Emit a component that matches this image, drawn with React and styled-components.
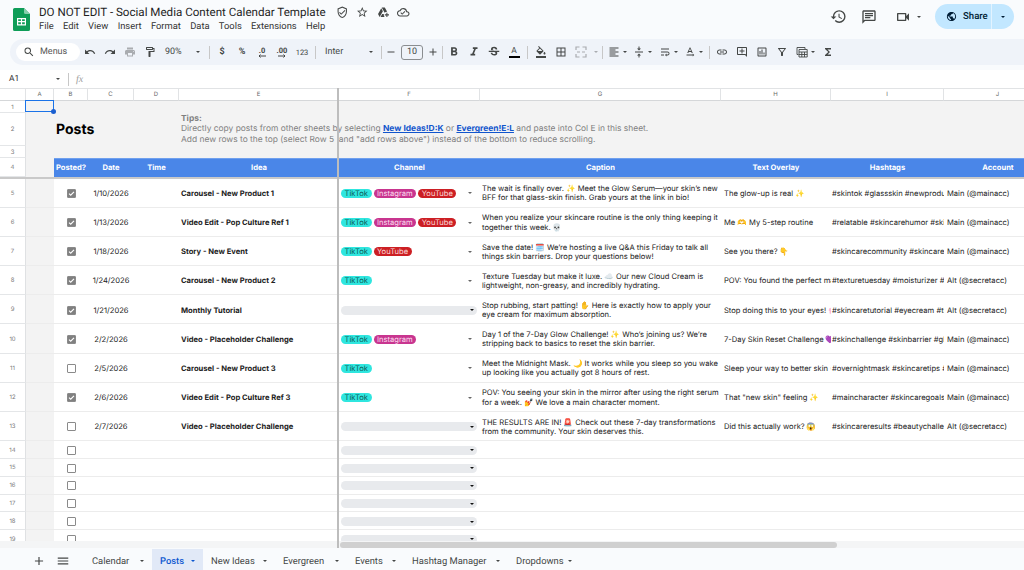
import React from 'react';
import styled, { createGlobalStyle } from 'styled-components';
import {
    MdOutlineVerifiedUser, MdStarBorder, MdOutlineAddToDrive, MdOutlineCloudDone, MdHistory, MdOutlineChat,
    MdOutlineVideocam, MdPublic, MdSearch, MdUndo, MdRedo, MdPrint, MdOutlineFormatPaint, MdAdd, MdRemove,
    MdFormatBold, MdFormatItalic, MdStrikethroughS, MdFormatColorFill, MdBorderAll, MdFormatAlignLeft,
    MdVerticalAlignCenter, MdOutlineWrapText, MdTextRotationNone, MdLink, MdOutlineAddComment,
    MdOutlineInsertChart, MdOutlineFilterAlt, MdFunctions, MdMenu,
} from 'react-icons/md';

const UI_FONT = 'Roboto, "Liberation Sans", sans-serif';
const CELL_FONT = 'Inter, "Liberation Sans", "Noto Sans", sans-serif';
const COLS = '26px 28px 34px 46px 45px 160px 141px 241px 110px 113px 108px';

const GlobalStyle = createGlobalStyle`
    html, body { margin: 0; padding: 0; background: #f9fbfd; overflow: hidden; }
    body { text-rendering: geometricPrecision; }
    #root { width: 1024px; height: 570px; }
`;

const Page = styled.div`
    width: 1024px;
    height: 570px;
    display: flex;
    flex-direction: column;
    overflow: hidden;
    background: #f9fbfd;
    color: #1f1f1f;
    font-family: ${UI_FONT};
`;

/* title bar */
const TitleBar = styled.header`
    height: 39px;
    flex: none;
    display: flex;
    align-items: flex-start;
    padding-left: 13px;
    box-sizing: border-box;
`;

const Logo = styled.svg`
    width: 17px;
    height: 23px;
    margin-top: 8px;
    flex: none;
`;

const TitleBlock = styled.div`
    margin-left: 9px;
    display: flex;
    flex-direction: column;
`;

const TitleRow = styled.div`
    display: flex;
    align-items: center;
    height: 18px;
    margin-top: 3px;
`;

const DocName = styled.span`
    font-size: 11.6px;
    white-space: nowrap;
    color: #1f1f1f;
`;

const TitleIcons = styled.div`
    margin-left: 10px;
    display: flex;
    gap: 8px;
    font-size: 12px;
    color: #444746;
    svg { display: block; width: 12.5px; height: 12.5px; }
`;

const MenuRow = styled.nav`
    display: flex;
    gap: 9.25px;
    font-size: 9.4px;
    color: #333;
    line-height: 12px;
`;

const RightActions = styled.div`
    margin-left: auto;
    margin-right: 10px;
    display: flex;
    align-items: center;
    height: 25px;
    margin-top: 4px;
    color: #444746;
`;

const ActionIcon = styled.span`
    display: flex;
    font-size: ${props => props.$size || 16}px;
    margin-right: ${props => props.$gap || 0}px;
`;

const Caret = styled.span`
    display: inline-block;
    flex: none;
    width: 0;
    height: 0;
    border-left: ${props => props.$size || 2.5}px solid transparent;
    border-right: ${props => props.$size || 2.5}px solid transparent;
    border-top: ${props => props.$size || 2.5}px solid ${props => props.$color || '#444746'};
`;

const ShareButton = styled.div`
    margin-left: 14px;
    width: 79px;
    height: 25px;
    border-radius: 13px;
    background: #c2e7ff;
    display: flex;
    align-items: center;
    color: #001d35;
`;

const ShareMain = styled.div`
    width: 57px;
    height: 25px;
    display: flex;
    align-items: center;
    gap: 6px;
    padding-left: 11px;
    box-sizing: border-box;
    border-right: 1px solid #e3f3ff;
    font-size: 9.6px;
    font-weight: 500;
    svg { font-size: 11px; }
`;

const ShareCaret = styled.div`
    flex: 1;
    display: flex;
    justify-content: center;
`;

/* toolbar */
const Toolbar = styled.div`
    height: 26px;
    flex: none;
    margin-left: 10px;
    padding-left: 6px;
    border-radius: 13px 0 0 13px;
    background: #eff3f9;
    display: flex;
    align-items: center;
    color: #444746;
`;

const SearchPill = styled.div`
    width: 64px;
    height: 18px;
    box-sizing: border-box;
    padding-left: 7px;
    border-radius: 9px;
    background: #fff;
    display: flex;
    align-items: center;
    gap: 5px;
    font-size: 9px;
    color: #555;
    svg { font-size: 12px; color: #444746; }
`;

const ToolButton = styled.span`
    width: ${props => props.$w || 20}px;
    height: 20px;
    flex: none;
    display: flex;
    align-items: center;
    justify-content: center;
    gap: ${props => props.$gap ?? 3}px;
    font-size: ${props => props.$size || 12}px;
    color: ${props => props.$muted ? '#a9acb0' : '#444746'};
`;

const Label = styled.span`
    font-size: ${props => props.$size || 9}px;
    font-weight: ${props => props.$bold ? 700 : 400};
    white-space: nowrap;
`;

const Select = styled.span`
    width: ${props => props.$w}px;
    height: 20px;
    flex: none;
    display: flex;
    align-items: center;
    justify-content: space-between;
    padding: 0 6px 0 ${props => props.$pad || 5}px;
    box-sizing: border-box;
    font-size: 9px;
`;

const Divider = styled.span`
    width: 1px;
    height: 13px;
    flex: none;
    margin: 0 ${props => props.$r ?? 2}px 0 ${props => props.$l ?? 3}px;
    background: #c7c7c7;
`;

const SizeBox = styled.span`
    width: 22px;
    height: 15px;
    margin: 0 1px;
    box-sizing: border-box;
    flex: none;
    display: flex;
    align-items: center;
    justify-content: center;
    border: 1px solid #8a8d90;
    border-radius: 3px;
    font-size: 9px;
`;

const Decimal = styled.span`
    display: flex;
    flex-direction: column;
    align-items: center;
    font-size: 7.5px;
    font-weight: 700;
    line-height: 7px;
`;

const TextColor = styled.span`
    display: flex;
    flex-direction: column;
    align-items: center;
    width: 11px;
    font-size: 8.5px;
    line-height: 9px;
    border-bottom: 2.5px solid #000;
`;

/* formula bar */
const FormulaBar = styled.div`
    height: 18px;
    flex: none;
    margin-top: 5px;
    background: #fff;
    display: flex;
    align-items: center;
    padding-left: 9px;
    font-size: 8.5px;
    color: #333;
`;

const NameBox = styled.span`
    width: 51px;
    display: flex;
    align-items: center;
    justify-content: space-between;
    margin-right: 5px;
`;

const Fx = styled.span`
    margin-left: 7px;
    font-family: "Liberation Serif", serif;
    font-style: italic;
    font-size: 10px;
    color: #9a9a9a;
`;

/* the sheet */
const Sheet = styled.main`
    position: relative;
    height: 453px;
    flex: none;
    overflow: hidden;
    background: #fff;
    font-family: ${CELL_FONT};
    font-size: 7.6px;
    color: #222;
`;

const FreezeColumn = styled.div`
    position: absolute;
    left: 337px;
    top: 0;
    bottom: 0;
    width: 2px;
    background: #bdbdbd;
    z-index: 3;
`;

const Row = styled.div`
    display: grid;
    grid-template-columns: ${COLS};
    height: ${props => props.$h}px;
    box-sizing: border-box;
`;

const ColHead = styled.div`
    display: flex;
    align-items: center;
    justify-content: center;
    box-sizing: border-box;
    border-right: 1px solid #e1e3e5;
    border-top: 1px solid #e1e3e5;
    border-bottom: 1px solid #d5d7d9;
    font-size: 6px;
    color: #666;
    background: #fff;
`;

const RowHead = styled.div`
    display: flex;
    align-items: center;
    justify-content: center;
    box-sizing: border-box;
    padding-top: 1px;
    border-right: 1px solid #dfe1e3;
    border-bottom: 1px solid #e4e6e8;
    font-size: 6px;
    color: #777;
    background: #fff;
`;

const Gutter = styled.div`
    position: relative;
    background: #f3f3f3;
    box-sizing: border-box;
    border-bottom: 1px solid ${props => props.$plain ? '#f3f3f3' : '#ececec'};
`;

const Selection = styled.div`
    position: absolute;
    inset: -1px 0 0 -1px;
    border: 1px solid #1a73e8;
    z-index: 2;
    &::after {
        content: '';
        position: absolute;
        right: -3px;
        bottom: -3px;
        width: 5px;
        height: 5px;
        border-radius: 50%;
        background: #1a5fd0;
    }
`;

const Banner = styled.div`
    grid-column: 3 / -1;
    background: #f3f3f3;
    display: flex;
    align-items: center;
`;

const BannerPosts = styled.h1`
    margin: 0;
    width: 127px;
    box-sizing: border-box;
    flex: none;
    padding-left: 2px;
    font-size: 14px;
    line-height: 16px;
    font-weight: 700;
    color: #000;
`;

const Tips = styled.div`
    line-height: 10.2px;
    font-size: 8.42px;
    color: #7f7f7f;
    white-space: nowrap;
    b { font-weight: 700; }
    a { color: #1155cc; font-weight: 700; text-decoration: underline; }
`;

const GreyFill = styled.div`
    background: #f3f3f3;
    grid-column: ${props => props.$span};
`;

const HeadCell = styled.div`
    background: #4a86e8;
    border-top: 1px solid #6fa0ee;
    color: #fff;
    font-weight: 700;
    display: flex;
    align-items: center;
    justify-content: center;
    white-space: nowrap;
`;

const FreezeRow = styled.div`
    height: 2px;
    background: #c9c9c9;
`;

const Cell = styled.div`
    box-sizing: border-box;
    border-bottom: 1px solid #ececec;
    display: flex;
    align-items: center;
    justify-content: ${props => props.$center ? 'center' : 'flex-start'};
    padding-top: 1.5px;
    padding-left: ${props => props.$center ? 0 : props.$pad ?? 2}px;
    font-weight: ${props => props.$bold ? 700 : 400};
    overflow: hidden;
    white-space: nowrap;
    min-width: 0;
    color: #222;
`;

const Caption = styled.div`
    line-height: 9.2px;
`;

const Check = styled.span`
    width: 9px;
    height: 9px;
    box-sizing: border-box;
    border-radius: 1px;
    display: flex;
    align-items: center;
    justify-content: center;
    background: ${props => props.$on ? '#808080' : '#fff'};
    border: 1px solid #8a8a8a;
`;

const ChipCell = styled.div`
    box-sizing: border-box;
    border-bottom: 1px solid #ececec;
    padding: 1.5px 3px 0 2px;
    display: flex;
    align-items: center;
    overflow: hidden;
`;

const Chips = styled.div`
    flex: 1;
    display: flex;
    align-items: center;
    gap: 2px;
`;

const Chip = styled.span`
    height: 9px;
    padding: 0 3.5px;
    border-radius: 5px;
    line-height: 9px;
    font-size: 7.6px;
    background: ${props => props.$bg};
    color: ${props => props.$fg};
    white-space: nowrap;
`;

const EmptyChip = styled.div`
    flex: 1;
    height: 9px;
    border-radius: 5px;
    background: #e8eaed;
    display: flex;
    align-items: center;
    justify-content: flex-end;
    padding-right: 3px;
`;

const RowCaret = styled.span`
    margin-right: 5px;
    display: flex;
`;

/* bottom */
const ScrollTrack = styled.div`
    position: relative;
    height: 7px;
    flex: none;
    background: #f4f5f6;
`;

const ScrollThumb = styled.div`
    position: absolute;
    left: 340px;
    top: 1px;
    width: 497px;
    height: 6px;
    border-radius: 3px;
    background: #d0d0d0;
`;

const ScrollFreeze = styled.div`
    position: absolute;
    left: 337px;
    top: 0;
    bottom: 0;
    width: 2px;
    background: #bdbdbd;
`;

const TabBar = styled.footer`
    flex: 1;
    display: flex;
    align-items: stretch;
    padding: 1px 0 0 32px;
    color: #444746;
`;

const TabTool = styled.span`
    width: ${props => props.$w}px;
    display: flex;
    align-items: center;
    font-size: 14px;
    padding-top: 2px;
`;

const Tab = styled.div`
    width: ${props => props.$w}px;
    box-sizing: border-box;
    display: flex;
    align-items: center;
    justify-content: space-between;
    padding: 3px 8.5px 0 8px;
    font-size: 9.4px;
    background: ${props => props.$active ? '#e1e9f7' : 'transparent'};
    color: ${props => props.$active ? '#0b57d0' : '#444746'};
    font-weight: ${props => props.$active ? 500 : 400};
`;

const MENUS = ['File', 'Edit', 'View', 'Insert', 'Format', 'Data', 'Tools', 'Extensions', 'Help'];
const LETTERS = ['A', 'B', 'C', 'D', 'E', 'F', 'G', 'H', 'I', 'J'];

const T = 'TikTok', I = 'Instagram', Y = 'YouTube';
const CHIP_COLORS = {
    [T]: { bg: '#2fe6df', fg: '#0d5a58' },
    [I]: { bg: '#c8358f', fg: '#fbdcee' },
    [Y]: { bg: '#cc1f24', fg: '#fbd7d7' },
};

const MAIN = 'Main (@mainacc)', ALT = 'Alt (@secretacc)';
const POSTS = [
    { n: 5, on: true, date: '1/10/2026', idea: 'Carousel - New Product 1', ch: [T, I, Y],
      cap: ['The wait is finally over. ✨ Meet the Glow Serum—your skin’s new', 'BFF for that glass-skin finish. Grab yours at the link in bio!'],
      over: 'The glow-up is real ✨', tags: '#skintok #glassskin #newproduct', acc: MAIN },
    { n: 6, on: true, date: '1/13/2026', idea: 'Video Edit - Pop Culture Ref 1', ch: [T, I, Y],
      cap: ['When you realize your skincare routine is the only thing keeping it', 'together this week. 💀'],
      over: 'Me 🫶 My 5-step routine', tags: '#relatable #skincarehumor #skincare', acc: MAIN },
    { n: 7, on: true, date: '1/18/2026', idea: 'Story - New Event', ch: [T, Y],
      cap: ['Save the date! 🗓️ We’re hosting a live Q&A this Friday to talk all', 'things skin barriers. Drop your questions below!'],
      over: 'See you there? 👇', tags: '#skincarecommunity #skincaretips', acc: MAIN },
    { n: 8, on: true, date: '1/24/2026', idea: 'Carousel - New Product 2', ch: [T],
      cap: ['Texture Tuesday but make it luxe. ☁️ Our new Cloud Cream is', 'lightweight, non-greasy, and incredibly hydrating.'],
      over: 'POV: You found the perfect match', tags: '#texturetuesday #moisturizer #skincare', acc: ALT },
    { n: 9, on: true, date: '1/21/2026', idea: 'Monthly Tutorial', ch: [],
      cap: ['Stop rubbing, start patting! ✋ Here is exactly how to apply your', 'eye cream for maximum absorption.'],
      over: 'Stop doing this to your eyes! 🌸', tags: '#skincaretutorial #eyecream #tips', acc: ALT },
    { n: 10, on: true, date: '2/2/2026', idea: 'Video - Placeholder Challenge', ch: [T, I],
      cap: ['Day 1 of the 7-Day Glow Challenge! ✨ Who’s joining us? We’re', 'stripping back to basics to reset the skin barrier.'],
      over: '7-Day Skin Reset Challenge 💜', tags: '#skinchallenge #skinbarrier #glowup', acc: MAIN },
    { n: 11, on: false, date: '2/5/2026', idea: 'Carousel - New Product 3', ch: [T],
      cap: ['Meet the Midnight Mask. 🌙 It works while you sleep so you wake', 'up looking like you actually got 8 hours of rest.'],
      over: 'Sleep your way to better skin 😴', tags: '#overnightmask #skincaretips #glow', acc: MAIN },
    { n: 12, on: true, date: '2/6/2026', idea: 'Video Edit - Pop Culture Ref 3', ch: [T],
      cap: ['POV: You seeing your skin in the mirror after using the right serum', 'for a week. 💅 We love a main character moment.'],
      over: 'That "new skin" feeling ✨', tags: '#maincharacter #skincaregoals #pov', acc: MAIN },
    { n: 13, on: false, date: '2/7/2026', idea: 'Video - Placeholder Challenge', ch: [],
      cap: ['THE RESULTS ARE IN! 🚨 Check out these 7-day transformations', 'from the community. Your skin deserves this.'],
      over: 'Did this actually work? 😱', tags: '#skincareresults #beautychallenge', acc: ALT },
];
const BLANK_ROWS = [14, 15, 16, 17, 18, 19];
const HEADERS = ['Posted?', 'Date', 'Time', 'Idea', 'Channel', 'Caption', 'Text Overlay', 'Hashtags', 'Account'];
const TABS = [
    { name: 'Calendar', w: 68 }, { name: 'Posts', w: 51, active: true }, { name: 'New Ideas', w: 72 }, { name: 'Evergreen', w: 72 },
    { name: 'Events', w: 57 }, { name: 'Hashtag Manager', w: 104 }, { name: 'Dropdowns', w: 72 },
];

function SheetsLogo() {
    return (
        <Logo viewBox="0 0 17 23">
            <path d="M1.6 0H11l6 6v15.4a1.6 1.6 0 0 1-1.6 1.6H1.6A1.6 1.6 0 0 1 0 21.4V1.6A1.6 1.6 0 0 1 1.6 0z" fill="#0f9d58" />
            <path d="M11 0l6 6h-4.4A1.6 1.6 0 0 1 11 4.4z" fill="#87ceac" />
            <path d="M4 10h9v7.5H4zM5.2 11.2v1.9h2.7v-1.9zm3.9 0v1.9h2.7v-1.9zM5.2 14.3v2h2.7v-2zm3.9 0v2h2.7v-2z" fill="#fff" fillRule="evenodd" />
        </Logo>
    );
}

function Arrow({ left }) {
    return (
        <svg width="8" height="4" viewBox="0 0 8 4">
            <path d={left ? 'M8 2H1M2.5 .5L1 2l1.5 1.5' : 'M0 2h7M5.5 .5L7 2 5.5 3.5'} stroke="#444746" fill="none" />
        </svg>
    );
}

function MergeIcon() {
    return (
        <svg width="12" height="12" viewBox="0 0 12 12" fill="none" stroke="#a9acb0" strokeWidth="1.2">
            <path d="M4.5 1H1v3M1 8v3h3.5M7.5 1H11v3M11 8v3H7.5M2 6h3M10 6H7" />
        </svg>
    );
}

function TableViewIcon() {
    return (
        <svg width="12" height="12" viewBox="0 0 12 12" fill="none" stroke="#444746" strokeWidth="0.9">
            <path d="M2.5 8.5H1V1.5h8V3" />
            <path d="M3 3.5h8.2v7.5H3zM3 6h8.2M3 8.5h8.2M5.8 6v5M8.5 6v5" />
        </svg>
    );
}

function Channel({ list }) {
    if (list.length === 0) {
        return <ChipCell><EmptyChip><Caret $size={2.5} $color="#111" /></EmptyChip></ChipCell>;
    }
    return (
        <ChipCell>
            <Chips>
                {list.map(c => <Chip key={c} $bg={CHIP_COLORS[c].bg} $fg={CHIP_COLORS[c].fg}>{c}</Chip>)}
            </Chips>
            <RowCaret><Caret $size={2} $color="#666" /></RowCaret>
        </ChipCell>
    );
}

function CheckBox({ on }) {
    return (
        <Check $on={on}>
            {on && (
                <svg width="7" height="7" viewBox="0 0 7 7">
                    <path d="M1 3.6l1.7 1.6L6 1.8" stroke="#fff" strokeWidth="1.1" fill="none" />
                </svg>
            )}
        </Check>
    );
}

export default function App() {
    return (
        <Page>
            <GlobalStyle />
            <TitleBar>
                <SheetsLogo />
                <TitleBlock>
                    <TitleRow>
                        <DocName>DO NOT EDIT - Social Media Content Calendar Template</DocName>
                        <TitleIcons>
                            <MdOutlineVerifiedUser />
                            <MdStarBorder />
                            <MdOutlineAddToDrive />
                            <MdOutlineCloudDone />
                        </TitleIcons>
                    </TitleRow>
                    <MenuRow>{MENUS.map(m => <span key={m}>{m}</span>)}</MenuRow>
                </TitleBlock>
                <RightActions>
                    <ActionIcon $size={17} $gap={14.5}><MdHistory /></ActionIcon>
                    <ActionIcon $size={16} $gap={18}><MdOutlineChat /></ActionIcon>
                    <ActionIcon $size={16} $gap={6}><MdOutlineVideocam /></ActionIcon>
                    <Caret />
                    <ShareButton>
                        <ShareMain><MdPublic />Share</ShareMain>
                        <ShareCaret><Caret $color="#001d35" /></ShareCaret>
                    </ShareButton>
                </RightActions>
            </TitleBar>

            <Toolbar>
                <SearchPill><MdSearch />Menus</SearchPill>
                <ToolButton><MdUndo /></ToolButton>
                <ToolButton><MdRedo /></ToolButton>
                <ToolButton $muted><MdPrint /></ToolButton>
                <ToolButton><MdOutlineFormatPaint /></ToolButton>
                <Select $w={46}>90%<Caret /></Select>
                <Divider />
                <ToolButton><Label $bold>$</Label></ToolButton>
                <ToolButton><Label $bold>%</Label></ToolButton>
                <ToolButton><Decimal>.0<Arrow left /></Decimal></ToolButton>
                <ToolButton><Decimal>.00<Arrow /></Decimal></ToolButton>
                <ToolButton><Label $size={7.5}>123</Label></ToolButton>
                <Divider />
                <Select $w={61} $pad={7}>Inter<Caret /></Select>
                <Divider $r={0} $l={2} />
                <ToolButton $w={18}><MdRemove /></ToolButton>
                <SizeBox>10</SizeBox>
                <ToolButton $w={18}><MdAdd /></ToolButton>
                <Divider $l={0} $r={1} />
                <ToolButton $size={14}><MdFormatBold /></ToolButton>
                <ToolButton $size={14}><MdFormatItalic /></ToolButton>
                <ToolButton $size={14}><MdStrikethroughS /></ToolButton>
                <ToolButton><TextColor>A</TextColor></ToolButton>
                <Divider $r={3} />
                <ToolButton><MdFormatColorFill /></ToolButton>
                <ToolButton><MdBorderAll /></ToolButton>
                <ToolButton $w={31} $gap={7}><MergeIcon /><Caret $size={2} $color="#a9acb0" /></ToolButton>
                <Divider $l={0} $r={1} />
                <ToolButton $w={26}><MdFormatAlignLeft /><Caret $size={2} /></ToolButton>
                <ToolButton $w={25}><MdVerticalAlignCenter /><Caret $size={2} /></ToolButton>
                <ToolButton $w={26}><MdOutlineWrapText /><Caret $size={2} /></ToolButton>
                <ToolButton $w={25}><MdTextRotationNone /><Caret $size={2} /></ToolButton>
                <Divider />
                <ToolButton><MdLink /></ToolButton>
                <ToolButton><MdOutlineAddComment /></ToolButton>
                <ToolButton><MdOutlineInsertChart /></ToolButton>
                <ToolButton><MdOutlineFilterAlt /></ToolButton>
                <ToolButton $w={26}><TableViewIcon /><Caret $size={2} /></ToolButton>
                <ToolButton><MdFunctions /></ToolButton>
            </Toolbar>

            <FormulaBar>
                <NameBox>A1<Caret /></NameBox>
                <Divider $l={3} $r={0} />
                <Fx>fx</Fx>
            </FormulaBar>

            <Sheet>
                <FreezeColumn />
                <Row $h={13}>
                    <ColHead />
                    {LETTERS.map(l => <ColHead key={l}>{l}</ColHead>)}
                </Row>
                <Row $h={12}>
                    <RowHead>1</RowHead>
                    <Gutter $plain><Selection /></Gutter>
                    <GreyFill $span="3 / -1" />
                </Row>
                <Row $h={33}>
                    <RowHead>2</RowHead>
                    <Gutter $plain />
                    <Banner>
                        <BannerPosts>Posts</BannerPosts>
                        <Tips>
                            <b>Tips:</b><br />
                            Directly copy posts from other sheets by selecting <a>New Ideas!D:K</a> or <a>Evergreen!E:L</a> and paste into Col E in this sheet.<br />
                            Add new rows to the top (select Row 5 &nbsp;and "add rows above") instead of the bottom to reduce scrolling.
                        </Tips>
                    </Banner>
                </Row>
                <Row $h={12}>
                    <RowHead>3</RowHead>
                    <Gutter $plain />
                    <GreyFill $span="3 / -1" />
                </Row>
                <Row $h={18.5}>
                    <RowHead>4</RowHead>
                    <Gutter $plain />
                    {HEADERS.map(h => <HeadCell key={h}>{h}</HeadCell>)}
                </Row>
                <FreezeRow />
                {POSTS.map(p => (
                    <Row $h={29.2} key={p.n}>
                        <RowHead>{p.n}</RowHead>
                        <Gutter />
                        <Cell $center><CheckBox on={p.on} /></Cell>
                        <Cell $center>{p.date}</Cell>
                        <Cell />
                        <Cell $bold>{p.idea}</Cell>
                        <Channel list={p.ch} />
                        <Cell><Caption>{p.cap[0]}<br />{p.cap[1]}</Caption></Cell>
                        <Cell $pad={3}>{p.over}</Cell>
                        <Cell $pad={1}>{p.tags}</Cell>
                        <Cell $pad={3}>{p.acc}</Cell>
                    </Row>
                ))}
                {BLANK_ROWS.map(n => (
                    <Row $h={17.8} key={n}>
                        <RowHead>{n}</RowHead>
                        <Gutter />
                        <Cell $center><CheckBox /></Cell>
                        <Cell />
                        <Cell />
                        <Cell />
                        <Channel list={[]} />
                        <Cell />
                        <Cell />
                        <Cell />
                        <Cell />
                    </Row>
                ))}
            </Sheet>

            <ScrollTrack>
                <ScrollFreeze />
                <ScrollThumb />
            </ScrollTrack>

            <TabBar>
                <TabTool $w={24}><MdAdd /></TabTool>
                <TabTool $w={28}><MdMenu /></TabTool>
                {TABS.map(t => (
                    <Tab key={t.name} $active={t.active} $w={t.w}>
                        {t.name}
                        <Caret $size={2.2} $color={t.active ? '#0b57d0' : '#444746'} />
                    </Tab>
                ))}
            </TabBar>
        </Page>
    );
}
